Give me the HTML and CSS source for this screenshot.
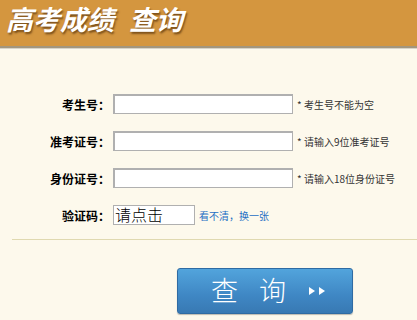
FILE: index.html
```html
<!DOCTYPE html>
<html lang="zh-CN">
<head>
<meta charset="utf-8">
<link rel="stylesheet" href="styles.css">
</head>
<body>
<div class="header">
  <h1 class="title"><span>高考成绩</span><span class="title-2">查询</span></h1>
</div>
<form class="form">
  <div class="row">
    <label class="label">考生号：</label>
    <input class="field" type="text">
    <span class="hint">* 考生号不能为空</span>
  </div>
  <div class="row">
    <label class="label">准考证号：</label>
    <input class="field" type="text">
    <span class="hint">* 请输入9位准考证号</span>
  </div>
  <div class="row">
    <label class="label">身份证号：</label>
    <input class="field" type="text">
    <span class="hint">* 请输入18位身份证号</span>
  </div>
  <div class="row">
    <label class="label">验证码：</label>
    <div class="captcha">请点击</div>
    <a class="refresh" href="#">看不清，换一张</a>
  </div>
  <div class="divider"></div>
  <div class="actions">
    <button class="submit" type="button">
      <span class="btn-char">查</span><span class="btn-char second">询</span>
      <svg class="arrows" width="18" height="10" viewBox="0 0 18 10"><polygon points="0,1 6,5 0,9" fill="#fff"/><polygon points="10,1 16,5 10,9" fill="#fff"/></svg>
    </button>
  </div>
</form>
</body>
</html>
```
FILE: styles.css
```css
* { box-sizing: border-box; }
html, body { margin: 0; padding: 0; }
body {
  width: 417px;
  height: 320px;
  overflow: hidden;
  background: #fdf9ec;
  font-family: "Noto Sans CJK SC", "Noto Sans", sans-serif;
}
.header {
  height: 48px;
  background: #d4963f;
  border-bottom: 2px solid #a3967d;
  box-shadow: 0 1px 0 #d8d4c8;
  padding: 0 0 0 6px;
}
.title {
  margin: 0;
  font-size: 27px;
  line-height: 38px;
  font-weight: 700;
  font-style: italic;
  color: #fff;
  text-shadow: 1px 2px 2px rgba(60, 30, 0, 0.6);
  white-space: nowrap;
  display: flex;
}
.title-2 { margin-left: 15px; }
.form {
  padding-top: 46px;
  display: flex;
  flex-direction: column;
}
.row {
  display: flex;
  align-items: center;
  height: 20px;
  margin-bottom: 17px;
}
.row:nth-child(4) { margin-bottom: 0; }
.label {
  width: 110px;
  text-align: right;
  font-size: 12px;
  font-weight: 700;
  color: #000;
  margin-right: 3px;
}
.field {
  width: 180px;
  height: 20px;
  border-style: solid;
  border-width: 2px 1px 1px 2px;
  border-color: #b0b0b0;
  background: #fff;
  margin: 0;
  padding: 0;
}
.hint {
  margin-left: 4px;
  font-size: 10px;
  color: #333;
}
.captcha {
  width: 82px;
  height: 20px;
  border: 1px solid #b0b0b0;
  background: #fff;
  font-size: 16px;
  line-height: 17px;
  padding-left: 1px;
  color: #000;
  font-weight: 300;
}
.refresh {
  margin-left: 4px;
  font-size: 10px;
  color: #1e6fc4;
  text-decoration: none;
}
.divider {
  margin: 14px 0 0 12px;
  height: 1px;
  background: #c9c088;
  border-bottom: 1px solid #e0d9b0;
}
.actions {
  padding: 28px 0 0 177px;
}
.submit {
  width: 176px;
  height: 46px;
  border: 1px solid #2f6ba3;
  border-radius: 3px;
  background: linear-gradient(#52a4dc, #3f87c4 60%, #3879b3);
  box-shadow: 0 1px 1px rgba(0,0,0,0.25);
  color: #fff;
  font-family: "Noto Sans CJK SC", sans-serif;
  font-size: 27px;
  font-weight: 300;
  display: flex;
  align-items: center;
  padding: 0 0 2px 33px;
}
.btn-char { line-height: 30px; }
.second { margin-left: 21px; }
.arrows { margin-left: 23px; margin-top: 2px; }
```
